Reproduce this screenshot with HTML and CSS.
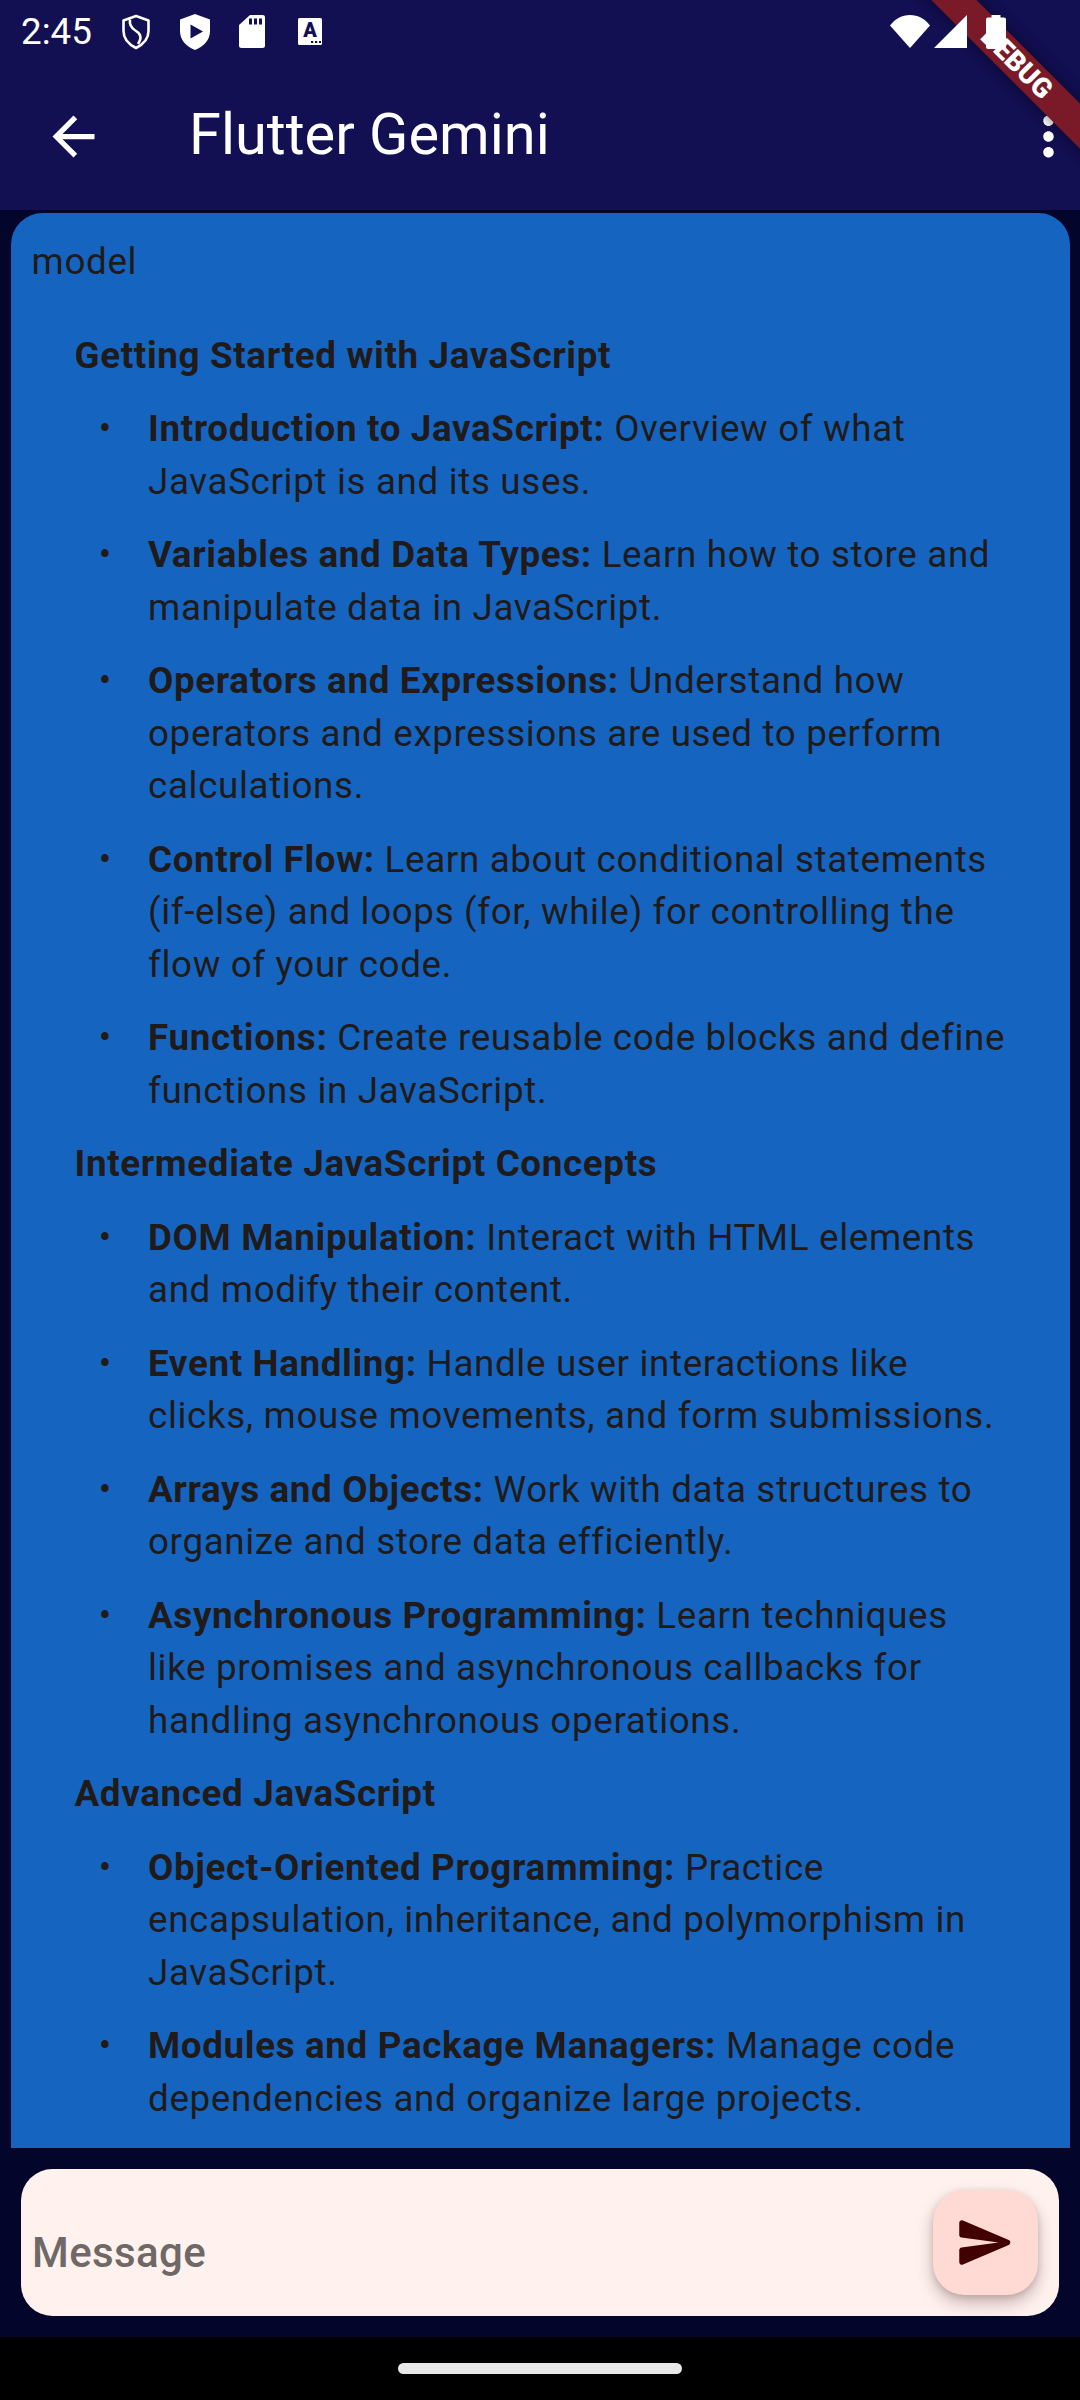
FILE: index.html
```html
<!DOCTYPE html>
<html lang="en">
<head>
    <meta charset="UTF-8">
    <meta name="viewport" content="width=device-width, initial-scale=1.0">
    <title>Flutter Gemini</title>
    <link rel="stylesheet" href="styles.css">
</head>
<body>
    <div class="screen">
        <header class="top">
            <div class="status-bar">
                <span class="time">2:45</span>
                <div class="status-left">
                    <svg class="icon-shield" width="30" height="36" viewBox="0 0 30 36">
                        <path d="M15 2 27.5 6.5V17c0 8-5.500 13.500-12.500 17C8 30.500 2.500 25 2.500 17V6.500Z" fill="none" stroke="#fff" stroke-width="2.600" stroke-linejoin="round"/>
                        <path d="M9 5.500C8 11 10 14 15 17c5 3 6 7 2 13" fill="none" stroke="#fff" stroke-width="2.600"/>
                    </svg>
                    <svg class="icon-play" width="30" height="36" viewBox="0 0 30 36">
                        <path fill-rule="evenodd" fill="#fff" d="M15 0 30 5.500V17c0 9-6 15.500-15 19C6 32.500 0 26 0 17V5.500ZM10.500 10.500V24.500L23 17.500Z"/>
                    </svg>
                    <svg class="icon-sd" width="26" height="33" viewBox="0 0 26 33">
                        <path fill="#fff" d="M11 0H23.500A2.500 2.500 0 0 1 26 2.500V30.500A2.500 2.500 0 0 1 23.500 33H2.500A2.500 2.500 0 0 1 0 30.500V10Z"/>
                        <path fill="#120f52" d="M10 3.500H13V9.500H10ZM15 3.500H18V9.500H15ZM20 3.500H23V9.500H20Z"/>
                    </svg>
                    <svg class="icon-a" width="25" height="27" viewBox="0 0 25 27">
                        <rect width="24" height="27" rx="1.500" fill="#fff"/>
                        <text x="12" y="19" text-anchor="middle" class="icon-a-letter">A</text>
                        <path fill="#120f52" d="M13 23h2.200v2H13ZM17 23h2.200v2H17ZM21 23h2v2h-2Z"/>
                    </svg>
                </div>
                <div class="status-right">
                    <svg width="40" height="33" viewBox="0 0 40 33">
                        <path fill="#fff" d="M0 10.500C5 4 12 0 20 0s15 4 20 10.500L20 33Z"/>
                    </svg>
                    <svg width="33" height="33" viewBox="0 0 33 33">
                        <path fill="#fff" d="M33 0V33H0Z"/>
                    </svg>
                    <svg width="20" height="34" viewBox="0 0 20 34">
                        <path fill="#fff" d="M5.500 0H14.500V2.500H18A2 2 0 0 1 20 4.500V32A2 2 0 0 1 18 34H2A2 2 0 0 1 0 32V4.500A2 2 0 0 1 2 2.500H5.500Z"/>
                    </svg>
                </div>
            </div>
            <div class="app-bar">
                <div class="bar-btn">
                    <svg width="63" height="63" viewBox="0 0 24 24"><path fill="#fff" d="M20 11H7.830l5.590-5.590L12 4l-8 8 8 8 1.410-1.410L7.830 13H20v-2z"/></svg>
                </div>
                <h1>Flutter Gemini</h1>
                <div class="bar-btn more">
                    <svg width="63" height="63" viewBox="0 0 24 24"><path fill="#fff" d="M12 8c1.100 0 2-.9 2-2s-.9-2-2-2-2 .9-2 2 .9 2 2 2zm0 2c-1.100 0-2 .9-2 2s.9 2 2 2 2-.9 2-2-.9-2-2-2zm0 6c-1.100 0-2 .9-2 2s.9 2 2 2 2-.9 2-2-.9-2-2-2z"/></svg>
                </div>
            </div>
        </header>

        <main class="chat">
            <section class="card">
                <div class="role">model</div>
                <div class="markdown">
                    <p class="heading">Getting Started with JavaScript</p>
                    <div class="item"><span class="dot">•</span><p><b>Introduction to JavaScript:</b> Overview of what JavaScript is and its uses.</p></div>
                    <div class="item"><span class="dot">•</span><p><b>Variables and Data Types:</b> Learn how to store and manipulate data in JavaScript.</p></div>
                    <div class="item"><span class="dot">•</span><p><b>Operators and Expressions:</b> Understand how operators and expressions are used to perform calculations.</p></div>
                    <div class="item"><span class="dot">•</span><p><b>Control Flow:</b> Learn about conditional statements (if-else) and loops (for, while) for controlling the flow of your code.</p></div>
                    <div class="item"><span class="dot">•</span><p><b>Functions:</b> Create reusable code blocks and define functions in JavaScript.</p></div>
                    <p class="heading">Intermediate JavaScript Concepts</p>
                    <div class="item"><span class="dot">•</span><p><b>DOM Manipulation:</b> Interact with HTML elements and modify their content.</p></div>
                    <div class="item"><span class="dot">•</span><p><b>Event Handling:</b> Handle user interactions like clicks, mouse movements, and form submissions.</p></div>
                    <div class="item"><span class="dot">•</span><p><b>Arrays and Objects:</b> Work with data structures to organize and store data efficiently.</p></div>
                    <div class="item"><span class="dot">•</span><p><b>Asynchronous Programming:</b> Learn techniques like promises and asynchronous callbacks for handling asynchronous operations.</p></div>
                    <p class="heading">Advanced JavaScript</p>
                    <div class="item"><span class="dot">•</span><p><b>Object-Oriented Programming:</b> Practice encapsulation, inheritance, and polymorphism in JavaScript.</p></div>
                    <div class="item"><span class="dot">•</span><p><b>Modules and Package Managers:</b> Manage code dependencies and organize large projects.</p></div>
                </div>
            </section>
        </main>

        <form class="composer">
            <span class="placeholder">Message</span>
            <button type="button" class="send">
                <svg width="63" height="63" viewBox="0 0 24 24"><path fill="#410001" d="M3.400 20.400l17.450-7.480c.81-.35.81-1.490 0-1.840L3.400 3.600c-.66-.29-1.390.2-1.390.91L2 9.120c0 .5.37.93.87.99L17 12 2.870 13.880c-.5.07-.87.5-.87 1l.01 4.610c0 .71.73 1.200 1.390.91z"/></svg>
            </button>
        </form>

        <footer class="nav-bar"><span class="pill"></span></footer>

        <div class="banner"><span>DEBUG</span></div>
    </div>
</body>
</html>
```

FILE: styles.css
```css
/* General Styles */
* {
    box-sizing: border-box;
}
body {
    margin: 0;
    font-family: 'Roboto', sans-serif;
    background: #000;
}
p, h1 {
    margin: 0;
}
.screen {
    position: relative;
    display: flex;
    flex-direction: column;
    width: 1080px;
    height: 2400px;
    overflow: hidden;
    background: #03052b;
}

/* Status bar + app bar */
.top {
    flex: 0 0 auto;
    background: #120f52;
    color: #fff;
}
.status-bar {
    position: relative;
    z-index: 3;
    display: flex;
    align-items: center;
    height: 63px;
    padding: 0 74px 0 21px;
}
.time {
    width: 100px;
    font-size: 36.75px;
}
.status-left {
    display: flex;
    align-items: center;
    gap: 29px;
    flex: 1;
}
.icon-a {
    margin-left: 4px;
}
.icon-a-letter {
    font-family: 'Roboto', sans-serif;
    font-size: 20px;
    font-weight: 900;
    fill: #120f52;
}
.status-right {
    display: flex;
    align-items: center;
    gap: 4px;
}
.status-right svg:last-child {
    margin-left: 15px;
}
.app-bar {
    display: flex;
    align-items: center;
    height: 147px;
}
.bar-btn {
    display: flex;
    align-items: center;
    justify-content: center;
    flex: 0 0 auto;
    width: 147px;
    height: 147px;
}
.bar-btn.more {
    width: 63px;
}
.app-bar h1 {
    flex: 1;
    padding: 0 0 5px 42px;
    font-size: 57.75px;
    font-weight: 400;
}

/* Chat */
.chat {
    flex: 1;
    min-height: 0;
    padding: 3px 10.5px 0;
}
.card {
    height: 100%;
    overflow: hidden;
    padding: 23px 21px 0;
    border-radius: 31.5px 31.5px 0 0;
    background: #1565c0;
    color: #201a19;
    font-size: 36.75px;
    line-height: 52.5px;
    letter-spacing: 0.656px;
}
.markdown {
    display: flex;
    flex-direction: column;
    gap: 21px;
    margin-top: 41px;
    padding: 0 40px 0 43px;
}
.heading {
    font-weight: 700;
}
.item {
    display: flex;
}
.dot {
    flex: 0 0 73.5px;
    padding-right: 12px;
    text-align: center;
}
b {
    font-weight: 700;
}

/* Message box */
.composer {
    position: relative;
    flex: 0 0 auto;
    display: flex;
    align-items: center;
    justify-content: space-between;
    height: 147px;
    margin: 21px 21px;
    padding: 0 21px 0 11px;
    border-radius: 31.5px;
    background: #fff1ee;
}
.placeholder {
    margin-top: 19px;
    color: #6e6866;
    font-size: 42px;
    font-weight: 500;
    letter-spacing: 0.4px;
}
.send {
    display: flex;
    align-items: center;
    justify-content: center;
    width: 105px;
    height: 105px;
    padding: 0;
    border: none;
    border-radius: 31.5px;
    background: #ffdad4;
    box-shadow: 0 8px 16px rgba(60, 30, 25, 0.28), 0 2px 6px rgba(60, 30, 25, 0.15);
}

/* Navigation bar */
.nav-bar {
    flex: 0 0 auto;
    display: flex;
    justify-content: center;
    align-items: center;
    height: 63px;
    background: #000;
}
.pill {
    width: 284px;
    height: 11px;
    border-radius: 6px;
    background: #e8e8e8;
}

/* Debug ribbon */
.banner {
    position: absolute;
    z-index: 2;
    top: 47px;
    left: 867px;
    width: 300px;
    height: 31.500px;
    display: flex;
    align-items: center;
    justify-content: center;
    transform: rotate(45deg);
    background: #7a1a28;
    box-shadow: 0 0 14px rgba(0, 0, 0, 0.5);
    color: #fff;
    font-size: 27.500px;
    font-weight: 900;
    line-height: 1;
}
```
